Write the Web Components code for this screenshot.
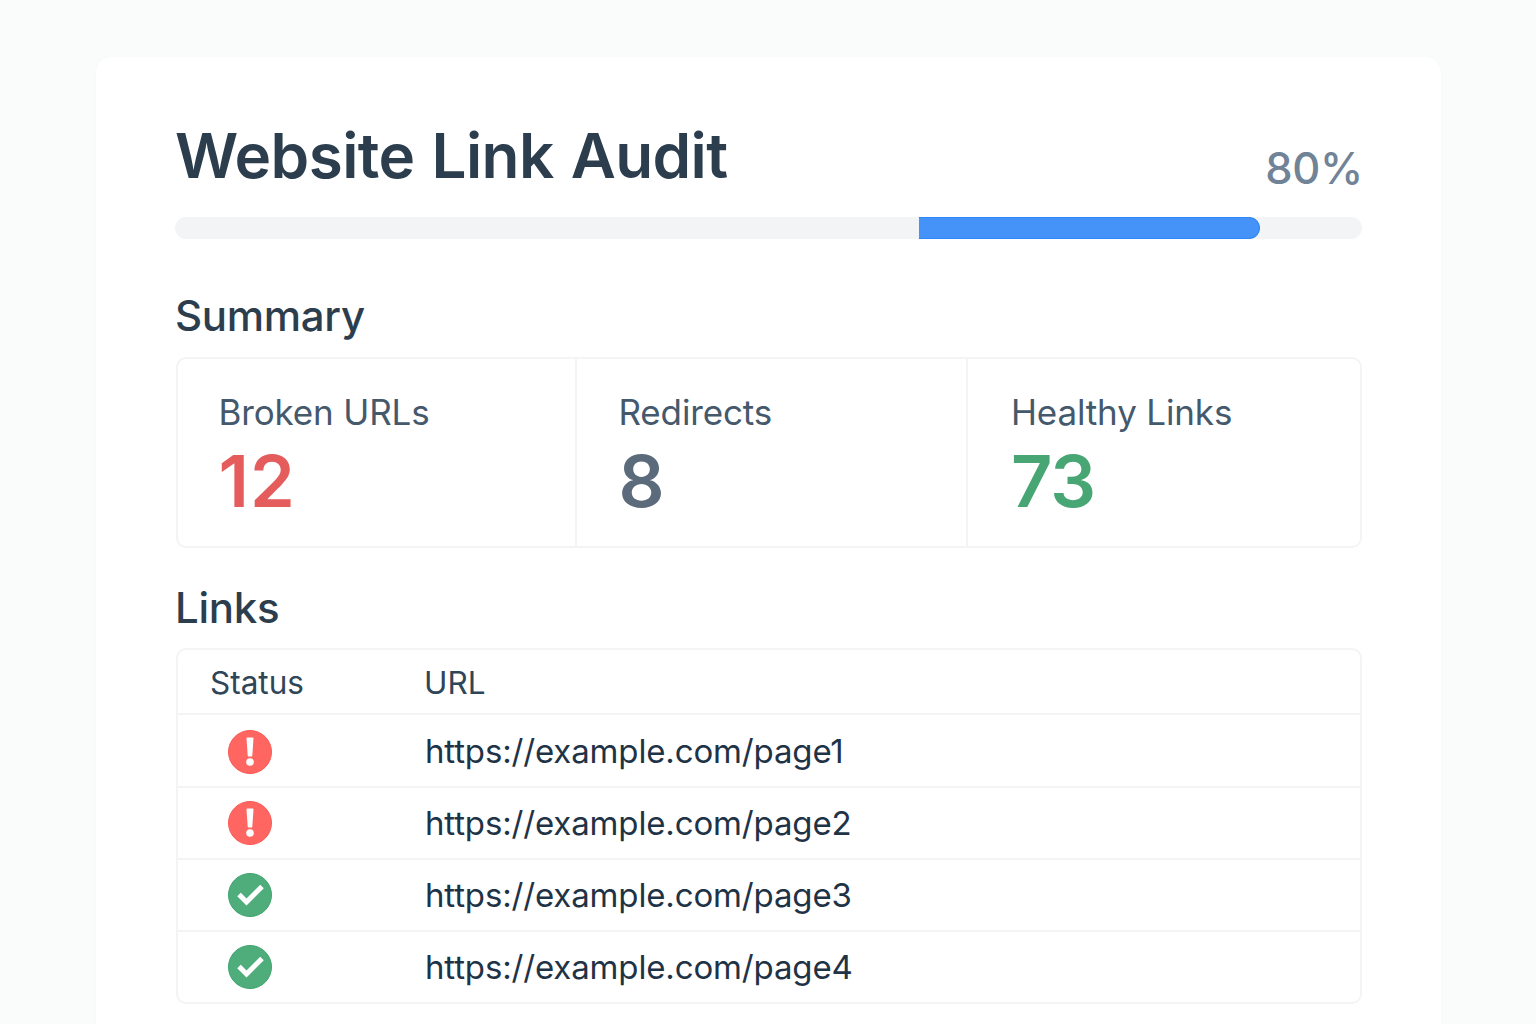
<!DOCTYPE html>
<html><head><meta charset="utf-8"><style>
html,body{margin:0;padding:0;height:1024px;overflow:hidden;background:#fafbfb;font-family:Inter,"Liberation Sans",sans-serif}
</style></head><body>
<audit-page></audit-page>
<template id="t-page"><style>
:host{display:block;padding:57px 95px 0 96px;height:967px;overflow:hidden}
.card{background:#fff;border-radius:16px;height:1100px;padding:60px 79px 0 79px;box-sizing:border-box;box-shadow:0 0 6px rgba(30,50,70,.015)}
.head{display:flex;justify-content:space-between;align-items:flex-end;height:77px}
h1{margin:0;font-size:62px;line-height:77px;font-weight:600;color:#2c3e4e;letter-spacing:-.6px;word-spacing:2px}
.pct{font-size:43.500px;line-height:54px;color:#718396;font-weight:500;margin-bottom:-1px;margin-right:-1px;letter-spacing:-.3px}
h2{margin:0;font-size:42px;line-height:50px;font-weight:500;color:#2c3e4e;letter-spacing:-.3px}
.sum{margin-top:52px}.links{margin-top:35px}
link-table{margin-top:15px}stat-row{margin-top:16px}
</style><div class="card">
<div class="head"><h1>Website Link Audit</h1><span class="pct">80%</span></div>
<audit-progress></audit-progress>
<h2 class="sum">Summary</h2>
<stat-row><stat-cell style="flex:0 0 399px;--ls:1px" label="Broken URLs" value="12" color="#e55c5c"></stat-cell><stat-cell style="flex:0 0 391px;padding-left:41.500px" label="Redirects" value="8" color="#5b6b7c"></stat-cell><stat-cell style="flex:1;border:0;padding-left:43px;--ls:-1px" label="Healthy Links" value="73" color="#48a574"></stat-cell></stat-row>
<h2 class="links">Links</h2>
<link-table></link-table>
</div></template>
<template id="t-progress"><style>
:host{display:block;height:22px;margin-top:23px;background:#f3f4f6;border-radius:11px;position:relative;overflow:hidden}
.f{position:absolute;left:744px;width:341px;top:0;bottom:0;background:#4593f8;border:1px solid #2f86f6;border-left:0;box-sizing:border-box;border-radius:0 11px 11px 0}
</style><div class="f"></div></template>
<template id="t-row"><style>
:host{display:flex;height:191px;box-sizing:border-box;border:2px solid #f2f4f5;border-radius:10px;margin-left:1px}
</style><slot></slot></template>
<template id="t-cell"><style>
:host{display:block;box-sizing:border-box;border-right:2px solid #f2f4f5;padding:31px 0 0 40.500px}
.l{font-size:35px;line-height:44px;color:#45596c;letter-spacing:-.15px}
.v{font-size:72px;line-height:80px;font-weight:600;margin-top:7px;letter-spacing:var(--ls,.3px)}
</style><div class="l"></div><div class="v"></div></template>
<template id="t-table"><style>
:host{display:block;box-sizing:border-box;height:356px;border:2px solid #f2f4f5;border-radius:10px;margin-left:1px}
.h{display:flex;height:65px;padding-top:2px;align-items:center;font-size:31.500px;color:#2f4558;border-bottom:2px solid #f2f4f5;box-sizing:border-box}
.s{width:246px;padding-left:32px;box-sizing:border-box}
</style><div class="h"><div class="s">Status</div><div>URL</div></div>
<link-row nudge style="height:73px" state="bad" url="https://example.com/page1"></link-row>
<link-row state="bad" url="https://example.com/page2"></link-row>
<link-row state="ok" url="https://example.com/page3"></link-row>
<link-row state="ok" url="https://example.com/page4" style="border-bottom-color:transparent"></link-row></template>
<template id="t-link"><style>
:host{display:flex;height:72px;align-items:center;box-sizing:border-box;border-bottom:2px solid #f2f4f5}
:host([nudge]) .i{margin-top:3px}
.i{width:247px;padding-left:50px;box-sizing:border-box;display:flex}
svg{width:44px;height:44px;display:block}
.u{font-size:33px;color:#1f3347;letter-spacing:-.15px}
</style><div class="i"></div><div class="u"></div></template>
<script>
const mk=(name,tid,init)=>customElements.define(name,class extends HTMLElement{constructor(){super();this.attachShadow({mode:'open'}).appendChild(document.getElementById(tid).content.cloneNode(true))}connectedCallback(){init&&init(this,this.shadowRoot)}});
mk('audit-progress','t-progress');
mk('stat-row','t-row');
mk('stat-cell','t-cell',(h,s)=>{s.querySelector('.l').textContent=h.getAttribute('label');const v=s.querySelector('.v');v.textContent=h.getAttribute('value');v.style.color=h.getAttribute('color')});
mk('link-row','t-link',(h,s)=>{s.querySelector('.u').textContent=h.getAttribute('url');
s.querySelector('.i').innerHTML=h.getAttribute('state')==='bad'
?'<svg viewBox="0 0 44 44"><circle cx="22" cy="22" r="21.5" fill="#ff6661" stroke="#fb5a56" stroke-width="1"/><path d="M18.500 8.500a1 1 0 0 1 1-1h5a1 1 0 0 1 1 1l-1.200 17a1 1 0 0 1-1 1h-2.600a1 1 0 0 1-1-1z" fill="#fff"/><circle cx="22" cy="32" r="3.800" fill="#fff"/></svg>'
:'<svg viewBox="0 0 44 44"><circle cx="22" cy="22" r="21.500" fill="#4fad7b" stroke="#3fa46f" stroke-width="1"/><path d="M11 21.500l7.500 7.500 15.500-15.500" fill="none" stroke="#fff" stroke-width="5"/></svg>'});
mk('link-table','t-table');
mk('audit-page','t-page');
</script>
</body></html>
